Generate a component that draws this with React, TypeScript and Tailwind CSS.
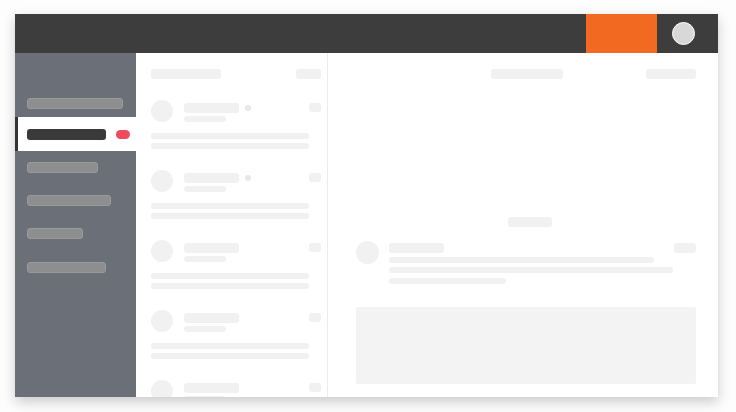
const sk = "bg-[#f1f1f1] rounded-[3px]";

function ListItem({ dot }: { dot: boolean }) {
  return (
    <div className="flex flex-col">
      <div className="flex items-start">
        <div className="w-[22px] h-[22px] rounded-full bg-[#f1f1f1] shrink-0" />
        <div className="ml-[11px] mt-[3px] flex flex-col">
          <div className="flex items-center">
            <div className={`w-[55px] h-[10px] ${sk}`} />
            {dot && <div className="ml-[6px] w-[6px] h-[6px] rounded-full bg-[#e8e8e8]" />}
          </div>
          <div className={`mt-[3px] w-[42px] h-[6px] ${sk}`} />
        </div>
        <div className={`ml-auto mt-[3px] w-[12px] h-[9px] ${sk}`} />
      </div>
      <div className={`mt-[11px] w-[158px] h-[6px] ${sk}`} />
      <div className={`mt-[4px] w-[158px] h-[6px] ${sk}`} />
    </div>
  );
}

export default function App() {
  const sideBar = "h-[11px] ml-[12px] rounded-[3px] bg-[#8d8e8f] border border-[#999a9b]";

  return (
    <div className="w-[736px] h-[412px] bg-[#fdfdfd] pt-[14px] pl-[15px] overflow-hidden">
      <div className="w-[703px] h-[383px] flex flex-col bg-white shadow-[0_5px_12px_rgba(0,0,0,0.2)] overflow-hidden">
        {/* Top bar */}
        <div className="h-[39px] flex bg-[#3d3d3d] shrink-0">
          <div className="flex-1" />
          <div className="w-[71px] bg-[#f26a22]" />
          <div className="w-[61px] flex items-center pl-[15px]">
            <div className="w-[23px] h-[23px] rounded-full bg-[#d8d8d8] border-[1.5px] border-white" />
          </div>
        </div>

        <div className="flex flex-1 min-h-0">
          {/* Sidebar */}
          <div className="w-[121px] bg-[#6b7078] flex flex-col pt-[45px] shrink-0">
            <div className={`${sideBar} w-[96px]`} />
            <div className="mt-[8px] h-[34px] bg-white border-l-[3px] border-[#333333] flex items-center pl-[9px]">
              <div className="w-[79px] h-[11px] rounded-[3px] bg-[#3a3a3a]" />
              <div className="ml-[10px] w-[14px] h-[9px] rounded-full bg-[#ef4b5c]" />
            </div>
            <div className={`${sideBar} mt-[11px] w-[71px]`} />
            <div className={`${sideBar} mt-[22px] w-[84px]`} />
            <div className={`${sideBar} mt-[22px] w-[56px]`} />
            <div className={`${sideBar} mt-[23px] w-[79px]`} />
          </div>

          {/* List column */}
          <div className="w-[192px] border-r border-[#ececec] pl-[15px] pr-[6px] pt-[16px] flex flex-col gap-[21px] shrink-0">
            <div className="flex items-center justify-between">
              <div className={`w-[70px] h-[10px] ${sk}`} />
              <div className={`w-[25px] h-[10px] ${sk}`} />
            </div>
            <ListItem dot />
            <ListItem dot />
            <ListItem dot={false} />
            <ListItem dot={false} />
            <ListItem dot={false} />
          </div>

          {/* Main panel */}
          <div className="flex-1 flex flex-col pt-[16px] pl-[28px] pr-[22px]">
            <div className="flex items-center">
              <div className={`ml-[135px] w-[72px] h-[10px] ${sk}`} />
              <div className={`ml-auto w-[50px] h-[10px] ${sk}`} />
            </div>
            <div className={`mt-[138px] ml-[152px] w-[44px] h-[10px] ${sk}`} />
            <div className="mt-[14px] flex items-start">
              <div className="w-[23px] h-[23px] rounded-full bg-[#f1f1f1] shrink-0" />
              <div className="ml-[10px] mt-[2px] flex-1 flex flex-col">
                <div className="flex items-center">
                  <div className={`w-[55px] h-[10px] ${sk}`} />
                  <div className={`ml-auto w-[22px] h-[10px] ${sk}`} />
                </div>
                <div className={`mt-[4px] w-[265px] h-[6px] ${sk}`} />
                <div className={`mt-[4px] w-[284px] h-[6px] ${sk}`} />
                <div className={`mt-[5px] w-[117px] h-[6px] ${sk}`} />
              </div>
            </div>
            <div className="mt-[23px] h-[77px] bg-[#f3f3f3] rounded-[2px]" />
          </div>
        </div>
      </div>
    </div>
  );
}
